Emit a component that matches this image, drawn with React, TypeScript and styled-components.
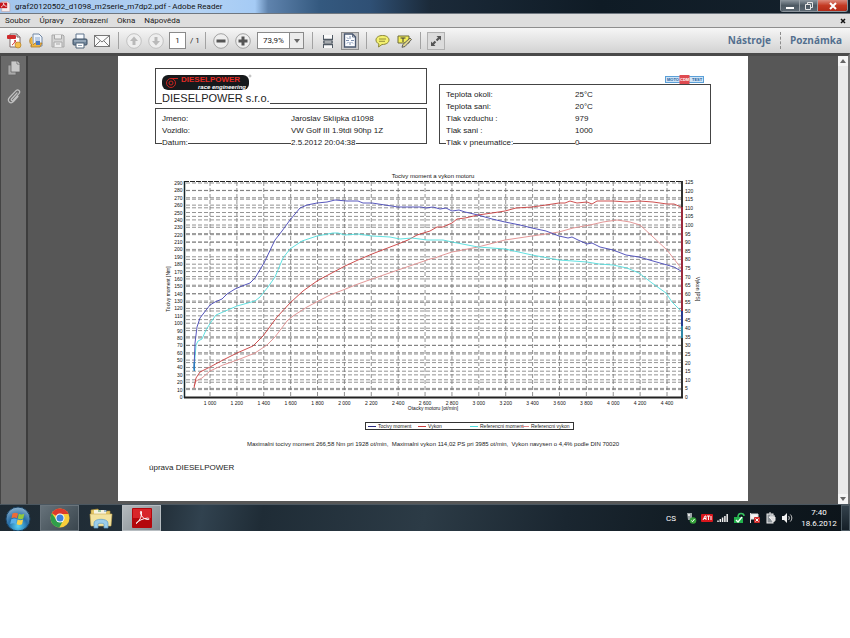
import React from "react";
import styled, { createGlobalStyle, css } from "styled-components";

const GlobalStyle = createGlobalStyle`
  * { box-sizing: border-box; }
  body { margin: 0; background: #fff; font-family: Roboto, "Noto Sans", sans-serif; }
  button, input, select { font: inherit; color: inherit; margin: 0; }
  ul, dl, dd, p, h1 { margin: 0; padding: 0; list-style: none; }
  svg { display: block; }
`;

/* ---------- window frame ---------- */

const TitleBar = styled.header`
  display: flex;
  align-items: center;
  height: 14px;
  padding-right: 2px;
  background: linear-gradient(90deg, #a3c5ec 0, #b3d2f4 200px, #a5cbf5 255px, #5f83ad 268px, #34597f 320px, #2f5075 370px, #1b2a39 430px, #0f1b25 600px, #14212c 100%);
  border-bottom: 1px solid #6f7780;
`;
const WindowTitle = styled.h1`
  flex: 1;
  margin-left: 4px;
  font-size: 8px;
  line-height: 12px;
  font-weight: 400;
  color: #111;
`;
const WindowButtons = styled.div`
  display: flex;
  align-self: flex-start;
  border: 1px solid #8b949c;
  border-top: 0;
  border-radius: 0 0 3px 3px;
  overflow: hidden;
`;
const WindowButton = styled.button<{ $close?: boolean }>`
  display: grid;
  place-items: center;
  width: ${(p) => (p.$close ? 30 : 18)}px;
  height: 11px;
  padding: 0;
  border: 0;
  border-left: 1px solid #9aa2a8;
  background: ${(p) =>
    p.$close ? "linear-gradient(#dc8a7c, #c43a24 50%, #b32a17)" : "linear-gradient(#8d979f, #4d5963 50%, #5d6973)"};
  &:first-child { border-left: 0; }
`;
const MenuBar = styled.nav`
  display: flex;
  align-items: center;
  gap: 3px;
  height: 14px;
  padding: 0 4px 0 2px;
  background: #dedede;
  border-bottom: 1px solid #8e8e8e;
`;
const MenuItem = styled.button`
  padding: 0 3px;
  border: 0;
  background: none;
  font-size: 8px;
  line-height: 12px;
  color: #222;
`;
const CloseDocument = styled(MenuItem)`
  margin-left: auto;
  padding: 0;
`;

/* ---------- toolbar ---------- */

const Toolbar = styled.div`
  display: flex;
  align-items: center;
  height: 25px;
  padding: 0 8px 0 3px;
  background: linear-gradient(#f6f6f6, #d2d2d2);
  font-size: 8px;
  color: #222;
`;
const frames = {
  pressed: css`border-color: #8d8d8d; background: #c9c9c9;`,
  raised: css`border-color: #b0b0b0; background: #dcdcdc;`,
};
const Tool = styled.button<{ $frame?: keyof typeof frames }>`
  display: grid;
  place-items: center;
  width: 18px;
  height: 18px;
  margin: 0 2px;
  padding: 0;
  border: 1px solid transparent;
  background: none;
  ${(p) => p.$frame && frames[p.$frame]}
`;
const Divider = styled.span`
  width: 1px;
  height: 17px;
  margin: 0 4px 0 5px;
  background: #a2a2a2;
`;
const PageField = styled.input`
  width: 17px;
  height: 17px;
  margin-left: 2px;
  padding: 0;
  border: 1px solid #8a8a8a;
  background: #fff;
  text-align: center;
`;
const PageCount = styled.label`
  width: 14px;
  padding-left: 4px;
  white-space: nowrap;
`;
const ZoomBox = styled.div`
  position: relative;
  margin: 0 3px;
`;
const ZoomSelect = styled.select`
  display: block;
  appearance: none;
  width: 47px;
  height: 17px;
  padding: 0 0 0 5px;
  border: 1px solid #8a8a8a;
  border-radius: 0;
  background: #fff;
`;
const ZoomArrow = styled.span`
  position: absolute;
  top: 1px;
  right: 1px;
  display: grid;
  place-items: center;
  width: 14px;
  height: 15px;
  border-left: 1px solid #8a8a8a;
  background: #ececec;
  pointer-events: none;
`;
const PaneButton = styled.button`
  padding: 0 9px;
  border: 0;
  background: none;
  font-size: 10px;
  line-height: 17px;
  font-weight: 700;
  color: #54708f;
  & + & { border-left: 1px dashed #8c8c8c; }
  &:last-child { padding-right: 0; }
`;
const PaneButtons = styled.div`
  display: flex;
  margin-left: auto;
  font-family: "Open Sans", "Noto Sans", sans-serif;
`;

/* ---------- document area ---------- */

const Workspace = styled.div`
  display: flex;
  border-top: 3px solid #4a4a4a;
  border-right: 2px solid #777;
  background: #575757;
`;
const SidePanel = styled.aside`
  display: flex;
  flex-direction: column;
  align-items: center;
  gap: 10px;
  width: 28px;
  padding-top: 2px;
  border-right: 2px solid #3d3d3d;
  border-left: 1px solid #444;
  background: #6a6a6a;
`;
const Canvas = styled.main`
  flex: 1;
  padding: 0 90px 3px;
`;
const ScrollTrack = styled.div`
  display: flex;
  flex-direction: column;
  justify-content: space-between;
  width: 10px;
  background: #e9e9e9;
`;
const ScrollButton = styled.button`
  display: grid;
  place-items: center;
  height: 10px;
  padding: 0;
  border: 0;
  background: #f4f4f4;
`;
const Paper = styled.article`
  padding: 12px 0 28px;
  background: #fff;
  color: #222;
  font-family: "Liberation Sans", Arial, sans-serif;
`;
const Heading = styled.div`
  display: grid;
  grid-template-columns: 1fr 1fr;
  align-items: end;
  gap: 12px;
  padding: 0 37px;
`;
const HeadingColumn = styled.div`
  display: flex;
  flex-direction: column;
  gap: 4px;
`;
const Frame = styled.div`
  border: 1px solid #444;
  padding: 4px 0 0 6px;
`;
const CompanyName = styled.p`
  width: max-content;
  margin-bottom: -1px;
  background: #fff;
  font-size: 11px;
  line-height: 12px;
`;
const Facts = styled.dl`
  padding: 4px 0 0 6px;
  border: 1px solid #444;
  font-size: 8px;
`;
const Fact = styled.div`
  display: grid;
  grid-template-columns: 129px 1fr;
  height: 12px;
  align-items: center;
  &:last-child { margin-bottom: -6px; }
`;
const Term = styled.dt`
  width: max-content;
  background: #fff;
  line-height: 10px;
`;
const Value = styled.dd`
  width: max-content;
  background: #fff;
  line-height: 10px;
`;
const TesterLogo = styled.div`
  display: flex;
  justify-content: flex-end;
  padding-right: 7px;
  margin-bottom: -4px;
`;
const Chart = styled.svg`
  width: 100%;
  height: auto;
  font-family: "Liberation Sans", Arial, sans-serif;
`;
const Legend = styled.ul`
  display: grid;
  grid-template-columns: 50px 52px 51px 52px;
  width: max-content;
  height: 8px;
  margin: 8px 0 0 247px;
  padding-left: 2px;
  border: 1px solid #333;
  font-size: 5px;
  line-height: 6px;
`;
const LegendItem = styled.li<{ $color: string }>`
  display: flex;
  align-items: center;
  gap: 2px;
  white-space: nowrap;
  &::before { content: ""; flex: none; width: 8px; height: 1px; background: ${(p) => p.$color}; }
`;
const Summary = styled.p`
  margin-top: 10px;
  font-size: 6px;
  line-height: 9px;
  text-align: center;
  white-space: pre-wrap;
`;
const Note = styled.p`
  margin: 14px 0 0 31px;
  font-size: 8px;
  line-height: 10px;
`;

/* ---------- taskbar ---------- */

const Taskbar = styled.footer`
  display: flex;
  align-items: center;
  height: 27px;
  border-top: 1px solid #4b5760;
  background: linear-gradient(100deg, #1d2932 0, #23303a 160px, #31424f 200px, #1f2c36 260px, #2c3b46 420px, #1a2630 560px, #101a21 700px, #0c141a 100%);
  color: #fff;
`;
const TaskButton = styled.button<{ $state?: "open" | "active" }>`
  display: grid;
  place-items: center;
  width: 39px;
  height: 26px;
  margin-right: 2px;
  padding: 0;
  border: 1px solid transparent;
  background: none;
  ${(p) => p.$state === "open" && css`border-color: #69747c; background: linear-gradient(135deg, #66727a, #3a464e);`}
  ${(p) => p.$state === "active" && css`border-color: #b7bdc1; background: linear-gradient(135deg, #b4babe, #7f888e);`}
  &:first-child { width: 36px; margin-right: 4px; }
`;
const Tray = styled.div`
  display: flex;
  align-items: center;
  margin-left: auto;
  font-size: 8px;
`;
const TrayButton = styled.button`
  display: grid;
  place-items: center;
  width: 12px;
  height: 14px;
  margin: 0 2px;
  padding: 0;
  border: 0;
  background: none;
`;
const Language = styled.span`
  margin-right: 7px;
`;
const Clock = styled.time`
  width: 44px;
  margin-left: 2px;
  line-height: 11px;
  text-align: center;
`;
const ShowDesktop = styled.button`
  width: 9px;
  height: 26px;
  padding: 0;
  border: 1px solid #4c5962;
  background: linear-gradient(#33414b, #151f27);
`;

/* ---------- icons ---------- */

const AdobeMark = ({ size, tile }: { size: number; tile?: boolean }) => (
  <svg width={size} height={size} viewBox="0 0 20 20">
    {tile ? <rect width="20" height="20" rx="1" fill="#b3070c" /> : <path d="M3 1h11l4 4v14H3z" fill="#f7eded" stroke="#b99" />}
    {tile && <rect x="1" y="1" width="18" height="9" fill="#d8262a" />}
    {!tile && <path d="M0 3h13v10H0z" fill="#c4161c" />}
    <path d={tile ? "M4 15.500c3-2 6-6.500 5.500-11.500 0-1.500-1.500-1-1 1 .8 4 4 6.500 8 6.500 1.500 0 .5-1.500-1-1.400C11 10.500 6.500 12.500 4 15.500z" : "M2 11c3-1.500 4.500-4 4.500-6.500C7.500 8 9 9.500 12 9.500"} fill="none" stroke="#fff" strokeWidth={tile ? 1 : 1.6} />
  </svg>
);
const CreatePdf = () => (
  <svg width="16" height="16" viewBox="0 0 16 16">
    <path d="M4 1h7l3 3v10H4z" fill="#fff" stroke="#7c6a6a" />
    <path d="M11 1v3h3" fill="#ddd" stroke="#7c6a6a" />
    <rect x="1" y="2" width="9" height="4" rx="1" fill="#cf2a2c" />
    <path d="M6 12c2-1 3-3 3-5 1 3 2 4 4 4" fill="none" stroke="#cf2a2c" />
    <circle cx="12" cy="12" r="3" fill="#f4bd4b" stroke="#b5822a" strokeWidth=".7" />
  </svg>
);
const OpenDoc = () => (
  <svg width="16" height="16" viewBox="0 0 16 16">
    <path d="M5 1h6l3 3v9H5z" fill="#edf3fb" stroke="#7288a4" />
    <path d="M7 5h5M7 7h5M7 9h4" stroke="#8ba8cf" />
    <path d="M4 4C1 5 1 11 4 12H3v2h9l2-4H7L5 12" fill="#efb643" stroke="#a9782b" strokeWidth=".8" />
    <path d="M8 8h4v4H8z" fill="#4d79bd" />
  </svg>
);
const SaveIcon = () => (
  <svg width="14" height="14" viewBox="0 0 14 14" fill="none" stroke="#a7a7a7">
    <path d="M1 1h11l1 1v11H1z" fill="#d5d5d5" />
    <path d="M3.500 1v4h7V1M3 13V8h8v5M5 10h4" fill="#ededed" />
  </svg>
);
const PrintIcon = () => (
  <svg width="16" height="16" viewBox="0 0 16 16">
    <path d="M4 6V1h8v5" fill="#f6faff" stroke="#60758c" />
    <rect x="1" y="6" width="14" height="6" rx="1" fill="#71869b" stroke="#3e5064" />
    <path d="M2 8h12" stroke="#b6c4d2" />
    <path d="M4 10h8v5H4z" fill="#fff" stroke="#53677b" />
    <path d="M6 12.500h4" stroke="#91a2b4" />
  </svg>
);
const MailIcon = () => (
  <svg width="16" height="12" viewBox="0 0 16 12" fill="none" stroke="#777">
    <rect x=".5" y=".5" width="15" height="11" fill="#fafafa" />
    <path d="M1 1l7 6 7-6M1 11l5-5M15 11l-5-5" />
  </svg>
);
const RoundIcon = ({ kind }: { kind: "up" | "down" | "minus" | "plus" }) => {
  const muted = kind === "up" || kind === "down";
  return (
    <svg width="16" height="16" viewBox="0 0 16 16">
      <circle cx="8" cy="8" r="7.300" fill="#eee" stroke={muted ? "#b8b8b8" : "#8f8f8f"} strokeWidth=".8" />
      {kind === "up" && <path d="M8 3.500l4 4.500H9.500v4h-3V8H4z" fill="#b9b9b9" />}
      {kind === "down" && <path d="M8 12.500L4 8h2.500V4h3v4H12z" fill="#b9b9b9" />}
      {!muted && <path d={kind === "minus" ? "M3.500 8h9" : "M3.500 8h9M8 3.500v9"} stroke="#555" strokeWidth="3" />}
    </svg>
  );
};
const FitWidth = () => (
  <svg width="12" height="14" viewBox="0 0 12 14" fill="none" stroke="#505a64">
    <path d="M1.500 1v5h9V1" fill="#fafafa" />
    <path d="M1.500 14v-4h9v4" fill="#fafafa" />
    <path d="M1 5.500h10M1 10.500h10" strokeWidth="1.500" />
    <path d="M1 8h10M3 7L1 8l2 1M9 7l2 1-2 1" strokeWidth=".8" />
  </svg>
);
const FitPage = () => (
  <svg width="14" height="15" viewBox="0 0 14 15" fill="none" stroke="#4a5870">
    <path d="M1.500 1h8l3 3v10h-11z" fill="#fafcff" strokeWidth="1.300" />
    <path d="M9.500 1v3h3" strokeWidth=".8" />
    <path d="M7 3v3M7 9v3M3 7.500h3M8 7.500h3M4 4.500l1.500 1.500M10 10.500L8.500 9M4 10.500L5.500 9" stroke="#6e83a6" strokeWidth=".9" />
  </svg>
);
const CommentIcon = () => (
  <svg width="15" height="14" viewBox="0 0 15 14">
    <path d="M7.500 1.500c4 0 6.500 2 6.500 4.500S11.500 10.500 7 10.500L3.500 13l.4-3C2 9 1 7.700 1 6c0-2.500 2.500-4.500 6.500-4.500z" fill="#f3f06f" stroke="#8b8738" />
    <path d="M4 5h7M4 7.300h6" stroke="#77742f" strokeWidth=".8" />
  </svg>
);
const HighlightIcon = () => (
  <svg width="15" height="14" viewBox="0 0 15 14">
    <path d="M1 2h11v7H1z" fill="#f4ef5a" stroke="#6d6b39" />
    <path d="M3.500 4h5M6 4v4" stroke="#393939" />
    <path d="M13 4l1.500 1.500L8 12.500l-3 .8.8-2.800z" fill="#ddd38a" stroke="#555" strokeWidth=".9" />
  </svg>
);
const ExpandIcon = () => (
  <svg width="14" height="14" viewBox="0 0 14 14" fill="#555">
    <path d="M7.500 2H12v4.500L10.500 5 8.300 7.200 6.800 5.700 9 3.500zM6.500 12H2V7.500L3.500 9l2.200-2.200 1.500 1.500L5 10.500z" />
  </svg>
);
const Triangle = ({ up }: { up?: boolean }) => (
  <svg width="6" height="4" viewBox="0 0 6 4"><path d={up ? "M3 0l3 4H0z" : "M0 0h6L3 4z"} fill="#666" /></svg>
);
const PagesIcon = () => (
  <svg width="14" height="18" viewBox="0 0 14 18" stroke="#666" strokeWidth=".8">
    <path d="M1 6h8v10H1z" fill="#a9a9a9" />
    <path d="M4 2h6l3 3v8H4z" fill="#c9c9c9" />
    <path d="M10 2v3h3" fill="#eee" />
  </svg>
);
const ClipIcon = () => (
  <svg width="16" height="18" viewBox="0 0 16 18" fill="none" stroke="#c0c0c0" strokeWidth="1.200" strokeLinecap="round">
    <path d="M11 6l-5.500 6c-1 1.200.5 2.500 1.500 1.400l6-6.700c2-2.500-1-5-3-3L3.500 10.500c-3 3.500 1 7 4 4L12 9.500" />
  </svg>
);
const CompanyLogo = () => (
  <svg width="90" height="19" viewBox="0 0 90 19" role="img" aria-label="Dieselpower race engineering">
    <rect x="0" y="2" width="87" height="15" rx="6" fill="#17191b" />
    <g fill="none" stroke="#c9241f">
      <circle cx="9" cy="10" r="4.500" /><circle cx="9" cy="10" r="2" /><path d="M9 5.500h7" />
    </g>
    <text x="19" y="9" fontFamily="Liberation Sans" fontWeight="700" fontSize="8" fill="#e02b25">DIESELPOWER</text>
    <text x="36" y="16" fontFamily="Liberation Sans" fontWeight="700" fontStyle="italic" fontSize="6" fill="#fff">race engineering</text>
    <circle cx="88" cy="3" r="1" fill="none" stroke="#777" strokeWidth=".5" />
  </svg>
);
const TestLogo = () => (
  <svg width="39" height="9" viewBox="0 0 39 9" fontFamily="Liberation Sans" fontWeight="700" role="img" aria-label="Moto CDM Test">
    <rect x=".5" y="1.500" width="38" height="6" fill="#cfe5f7" stroke="#5ba0d8" />
    <rect x="14.500" y="0" width="10" height="9" fill="#df4a50" />
    <text x="2" y="6" fontSize="4" fill="#1e5c9c">MOTO</text>
    <text x="15" y="6" fontSize="4" fill="#fff">CDM</text>
    <text x="27" y="6" fontSize="4" fill="#1e5c9c">TEST</text>
  </svg>
);
const StartOrb = () => (
  <svg width="26" height="26" viewBox="0 0 26 26">
    <defs>
      <radialGradient id="orb" cx=".5" cy=".8" r=".8"><stop offset="0" stopColor="#59d3f6" /><stop offset=".5" stopColor="#256da8" /><stop offset="1" stopColor="#8fb2cc" /></radialGradient>
    </defs>
    <circle cx="13" cy="13" r="12" fill="url(#orb)" stroke="#1a4263" />
    <path d="M7.500 7.500c2-1 3.500-1 5.500 0l-1 4.800c-2-1-3.500-1-5.500 0z" fill="#ef6a35" />
    <path d="M13.800 7.800c2 1 3.500 1 5.500 0l-1 4.800c-2 1-3.500 1-5.500 0z" fill="#93c93d" />
    <path d="M6.300 13.200c2-1 3.500-1 5.500 0l-1 4.800c-2-1-3.500-1-5.500 0z" fill="#58b0ea" />
    <path d="M12.600 13.500c2 1 3.500 1 5.500 0l-1 4.800c-2 1-3.500 1-5.500 0z" fill="#fbd14a" />
  </svg>
);
const ChromeIcon = () => (
  <svg width="20" height="20" viewBox="0 0 20 20">
    <circle cx="10" cy="10" r="9.500" fill="#f8ce3a" />
    <path d="M10 10L1.800 5.200A9.500 9.500 0 0 1 18.600 6H10z" fill="#dd3a2c" />
    <path d="M1.800 5.200A9.500 9.500 0 0 0 9.300 19.500L13.500 12 10 10 6.500 12z" fill="#2f9e4b" />
    <circle cx="10" cy="10" r="4.500" fill="#fff" />
    <circle cx="10" cy="10" r="3.500" fill="#3f82dc" />
  </svg>
);
const FolderIcon = () => (
  <svg width="24" height="22" viewBox="0 0 24 22">
    <path d="M2 3l7-1 1 2h11v14H2z" fill="#e4c766" stroke="#b3953c" strokeWidth=".6" />
    <path d="M5 3h12v4H5z" fill="#f7f3df" /><path d="M9 4h3" stroke="#4a9e57" /><path d="M15 4h3" stroke="#4c86c4" />
    <path d="M1 7h22l-1 12H2z" fill="#f3e3a0" stroke="#c9ad56" strokeWidth=".6" />
    <path d="M5 21v-5c0-5 14-5 14 0v5h-4v-4c0-1-6-1-6 0v4z" fill="#9bcdea" stroke="#5f9ec7" strokeWidth=".7" />
  </svg>
);

const trayIcons: { label: string; art: React.ReactNode }[] = [
  { label: "Bezpečně odebrat hardware", art: <><path d="M2 1h5v7H3z" fill="#9ca5a7" /><path d="M3 2h2v2H3z" fill="#e6e6e6" /><circle cx="8" cy="8.500" r="3.300" fill="#35a23a" /><path d="M6.500 8.500l1 1.200 2-2.700" stroke="#fff" fill="none" /></> },
  { label: "ATI", art: <><rect y="2" width="12" height="8" rx="1" fill="#d8161c" /><path d="M2 8l2-4h1v4M3 6.500h2M6 4h3M7.500 4v4M10 4v4" stroke="#fff" fill="none" /></> },
  { label: "Síť", art: <path d="M1 10V8.500M3.300 10V7M5.600 10V5.500M7.900 10V4M10.200 10V2" stroke="#f1f1f1" strokeWidth="1.500" /> },
  { label: "Antivirus", art: <><path d="M1 5h9v6H1z" fill="#21b24b" /><path d="M5 5c0-5 6-4 6-1" stroke="#37c45f" strokeWidth="1.500" fill="none" /><path d="M3 8l2 2 4-5" stroke="#fff" strokeWidth="1.300" fill="none" /></> },
  { label: "Centrum akcí", art: <><path d="M1.500 1v10M2 2h7v5H2" stroke="#ddd" fill="#f4f4f4" /><rect x="5" y="5" width="6" height="6" rx="1" fill="#d02b29" /><path d="M6.500 6.500l3 3M9.500 6.500l-3 3" stroke="#fff" /></> },
  { label: "Napájení", art: <><rect x="2" y="2" width="6" height="9" fill="#8d9499" stroke="#eee" /><path d="M4 1h2M4 5h6v3c0 2-3 2-3 0zM6 3v2M9 3v2" stroke="#eee" fill="#ddd" /></> },
  { label: "Hlasitost", art: <><path d="M1 4h2l3-3v10L3 8H1z" fill="#f2f2f2" /><path d="M7.500 4c1 1 1 3 0 4M9.300 2.500c2 2 2 5 0 7" stroke="#ccc" fill="none" /></> },
];

/* ---------- chart ---------- */

type Point = [number, number];

const torque: Point[] = [[194, 369], [195, 343], [197, 327], [200, 318], [210, 305], [215, 302], [222, 299], [227, 294], [235, 289], [242, 286], [250, 283], [255, 278], [264, 263], [275, 240], [282, 231], [290, 220], [300, 208], [307, 205], [317, 203], [327, 202], [335, 200], [347, 201], [358, 201], [363, 203], [372, 203], [385, 205], [398, 207], [410, 207], [421, 207], [426, 208], [433, 207], [440, 209], [446, 208], [452, 211], [459, 210], [465, 212], [478, 215], [492, 219], [505, 222], [520, 225], [532, 228], [546, 231], [559, 236], [568, 238], [572, 237], [578, 240], [587, 244], [592, 243], [600, 247], [613, 250], [626, 255], [639, 257], [653, 261], [667, 265], [674, 267], [681, 271]];
const refTorque: Point[] = [[194, 370], [196, 345], [198, 341], [202, 339], [206, 330], [211, 322], [216, 315], [223, 312], [237, 306], [255, 301], [260, 297], [268, 287], [275, 277], [283, 258], [290, 249], [302, 241], [317, 236], [333, 233], [338, 233], [345, 235], [358, 234], [372, 236], [390, 237], [400, 239], [412, 238], [427, 240], [443, 240], [452, 242], [478, 247], [505, 249], [532, 255], [559, 260], [587, 262], [599, 264], [613, 265], [627, 268], [639, 273], [652, 283], [666, 293], [672, 302], [681, 311]];
const power: Point[] = [[194, 388], [196, 378], [200, 372], [210, 367], [223, 360], [237, 353], [253, 346], [263, 336], [277, 317], [290, 303], [303, 291], [317, 281], [328, 275], [345, 266], [358, 260], [372, 254], [385, 249], [398, 244], [408, 240], [417, 235], [430, 231], [437, 227], [443, 227], [452, 223], [457, 219], [465, 218], [478, 215], [492, 213], [505, 211], [516, 208], [532, 207], [546, 205], [559, 203], [565, 203], [570, 201], [577, 203], [587, 202], [592, 204], [597, 201], [613, 201], [627, 202], [639, 201], [653, 202], [667, 204], [674, 204], [681, 207]];
const refPower: Point[] = [[194, 386], [196, 381], [202, 378], [210, 371], [223, 365], [240, 359], [255, 353], [267, 345], [275, 337], [287, 321], [293, 316], [307, 307], [330, 295], [343, 290], [358, 284], [372, 279], [398, 270], [430, 259], [435, 258], [440, 256], [452, 252], [478, 247], [505, 240], [532, 236], [559, 232], [573, 228], [590, 225], [603, 222], [617, 220], [630, 222], [640, 225], [652, 236], [667, 250], [681, 268]];

const toPoints = (pts: Point[]) => pts.map((p) => p.join(",")).join(" ");
const yTorque = (v: number) => 397 - (v * 214) / 290;
const yPower = (v: number) => 397 - (v * 215) / 125;
const xSpeed = (v: number) => 210 + ((v - 1000) * 457) / 3400;
const range = (from: number, to: number, step: number) =>
  Array.from({ length: (to - from) / step + 1 }, (_, i) => from + i * step);
const spaced = (v: number) => `${Math.floor(v / 1000)} ${String(v % 1000).padStart(3, "0")}`;

const PowerChart = () => (
  <Chart viewBox="118 144 630 270" role="img" aria-label="Tocivy moment a vykon motoru" fontSize="5" fill="#111">
    <text x="433" y="178" textAnchor="middle" fontSize="6">Tocivy moment a vykon motoru</text>
    <g stroke="#777" strokeWidth="0.800" strokeDasharray="4 2">
      {range(10, 290, 10).map((v) => <path key={`t${v}`} d={`M186 ${yTorque(v)}H681`} />)}
      {range(5, 120, 5).map((v) => <path key={`p${v}`} d={`M186 ${yPower(v)}H681`} />)}
      {range(1000, 4400, 200).map((v) => <path key={`s${v}`} d={`M${xSpeed(v)} 182V396`} />)}
    </g>
    {range(0, 290, 10).map((v) => <text key={v} x="182.500" y={yTorque(v) + 2} textAnchor="end">{v}</text>)}
    {range(0, 125, 5).map((v) => <text key={v} x="685" y={yPower(v) + 2}>{v}</text>)}
    {range(1000, 4400, 200).map((v) => <text key={v} x={xSpeed(v)} y="405" textAnchor="middle">{spaced(v)}</text>)}
    <text x="433" y="410" textAnchor="middle">Otacky motoru [ot/min]</text>
    <text transform="translate(170 289) rotate(-90)" textAnchor="middle">Tocivy moment [Nm]</text>
    <text transform="translate(696 289) rotate(90)" textAnchor="middle">Vykon [PS]</text>
    <path d="M184 181.500H682" stroke="#222" strokeDasharray="5 1" />
    <path d="M184.500 181V398" stroke="#16262b" strokeWidth="1.500" />
    <path d="M682 181V398" stroke="#333" strokeWidth="2" />
    <path d="M184 397.500H683" stroke="#222" strokeWidth="2" />
    <g fill="none" strokeWidth="0.900">
      <polyline points={toPoints(refPower)} stroke="#e08c8c" />
      <polyline points={toPoints(power)} stroke="#c83c3c" />
      <polyline points={toPoints(refTorque)} stroke="#4fdede" />
      <polyline points={toPoints(torque)} stroke="#4545b5" />
    </g>
    <g strokeWidth="1.500">
      <path d="M682 207V311" stroke="#c02840" />
      <path d="M682 311V326" stroke="#2440b0" />
      <path d="M682 326V338" stroke="#2fa6cf" />
      <path d="M194.300 371V362" stroke="#2a7fc0" />
    </g>
  </Chart>
);

/* ---------- page ---------- */

const FactList = ({ rows }: { rows: [string, string][] }) => (
  <Facts>
    {rows.map(([k, v]) => <Fact key={k}><Term>{k}</Term><Value>{v}</Value></Fact>)}
  </Facts>
);

export default function App() {
  return (
    <>
      <GlobalStyle />
      <TitleBar>
        <AdobeMark size={11} />
        <WindowTitle>graf20120502_d1098_m2serie_m7dp2.pdf - Adobe Reader</WindowTitle>
        <WindowButtons>
          <WindowButton aria-label="Minimalizovat"><svg width="8" height="8"><path d="M0 5h8v2H0z" fill="#fff" /></svg></WindowButton>
          <WindowButton aria-label="Obnovit"><svg width="8" height="8" fill="none" stroke="#e8e8e8"><path d="M2.500 2V.5h5v5H6M.5 2.500h5v5h-5z" /></svg></WindowButton>
          <WindowButton $close aria-label="Zavřít"><svg width="8" height="8"><path d="M1 1l6 6M7 1L1 7" stroke="#fff" strokeWidth="2" /></svg></WindowButton>
        </WindowButtons>
      </TitleBar>
      <MenuBar>
        {["Soubor", "Úpravy", "Zobrazení", "Okna", "Nápověda"].map((m) => <MenuItem key={m}>{m}</MenuItem>)}
        <CloseDocument aria-label="Zavřít dokument"><svg width="6" height="6"><path d="M1 1l4 4M5 1L1 5" stroke="#111" strokeWidth="1.500" /></svg></CloseDocument>
      </MenuBar>
      <Toolbar role="toolbar">
        <Tool aria-label="Vytvořit PDF"><CreatePdf /></Tool>
        <Tool aria-label="Otevřít"><OpenDoc /></Tool>
        <Tool aria-label="Uložit"><SaveIcon /></Tool>
        <Tool aria-label="Tisk"><PrintIcon /></Tool>
        <Tool aria-label="E-mail"><MailIcon /></Tool>
        <Divider />
        <Tool aria-label="Předchozí stránka"><RoundIcon kind="up" /></Tool>
        <Tool aria-label="Další stránka"><RoundIcon kind="down" /></Tool>
        <PageField id="page" defaultValue="1" />
        <PageCount htmlFor="page">/ 1</PageCount>
        <Divider />
        <Tool aria-label="Zmenšit"><RoundIcon kind="minus" /></Tool>
        <Tool aria-label="Zvětšit"><RoundIcon kind="plus" /></Tool>
        <ZoomBox>
          <ZoomSelect aria-label="Lupa" defaultValue="73,9%"><option>73,9%</option><option>100%</option></ZoomSelect>
          <ZoomArrow><Triangle /></ZoomArrow>
        </ZoomBox>
        <Divider />
        <Tool aria-label="Šířka stránky"><FitWidth /></Tool>
        <Tool aria-label="Celá stránka" $frame="pressed"><FitPage /></Tool>
        <Divider />
        <Tool aria-label="Komentář"><CommentIcon /></Tool>
        <Tool aria-label="Zvýraznit"><HighlightIcon /></Tool>
        <Divider />
        <Tool aria-label="Celá obrazovka" $frame="raised"><ExpandIcon /></Tool>
        <PaneButtons>
          <PaneButton>Nástroje</PaneButton>
          <PaneButton>Poznámka</PaneButton>
        </PaneButtons>
      </Toolbar>
      <Workspace>
        <SidePanel>
          <Tool aria-label="Miniatury stránek"><PagesIcon /></Tool>
          <Tool aria-label="Přílohy"><ClipIcon /></Tool>
        </SidePanel>
        <Canvas>
          <Paper>
            <Heading>
              <HeadingColumn>
                <Frame>
                  <CompanyLogo />
                  <CompanyName>DIESELPOWER s.r.o.</CompanyName>
                </Frame>
                <FactList rows={[["Jmeno:", "Jaroslav Sklípka d1098"], ["Vozidlo:", "VW Golf III 1.9tdi 90hp 1Z"], ["Datum:", "2.5.2012 20:04:38"]]} />
              </HeadingColumn>
              <HeadingColumn>
                <TesterLogo><TestLogo /></TesterLogo>
                <FactList rows={[["Teplota okoli:", "25°C"], ["Teplota sani:", "20°C"], ["Tlak vzduchu :", "979"], ["Tlak sani :", "1000"], ["Tlak v pneumatice:", "0"]]} />
              </HeadingColumn>
            </Heading>
            <PowerChart />
            <Legend>
              <LegendItem $color="#2a2a80">Tocivy moment</LegendItem>
              <LegendItem $color="#c83c3c">Vykon</LegendItem>
              <LegendItem $color="#4fdede">Referencni moment</LegendItem>
              <LegendItem $color="#e08c8c">Referencni vykon</LegendItem>
            </Legend>
            <Summary>{"Maximalni tocivy moment 266,58 Nm pri 1928 ot/min,  Maximalni vykon 114,02 PS pri 3985 ot/min,  Vykon navysen o 4,4% podle DIN 70020"}</Summary>
            <Note>úprava DIESELPOWER</Note>
          </Paper>
        </Canvas>
        <ScrollTrack>
          <ScrollButton aria-label="Nahoru"><Triangle up /></ScrollButton>
          <ScrollButton aria-label="Dolů"><Triangle /></ScrollButton>
        </ScrollTrack>
      </Workspace>
      <Taskbar>
        <TaskButton aria-label="Start"><StartOrb /></TaskButton>
        <TaskButton aria-label="Google Chrome" $state="open"><ChromeIcon /></TaskButton>
        <TaskButton aria-label="Průzkumník"><FolderIcon /></TaskButton>
        <TaskButton aria-label="Adobe Reader" $state="active"><AdobeMark size={20} tile /></TaskButton>
        <Tray>
          <Language>CS</Language>
          {trayIcons.map((t) => (
            <TrayButton key={t.label} aria-label={t.label}><svg width="12" height="12" viewBox="0 0 12 12">{t.art}</svg></TrayButton>
          ))}
          <Clock>7:40<br />18.6.2012</Clock>
          <ShowDesktop aria-label="Zobrazit plochu" />
        </Tray>
      </Taskbar>
    </>
  );
}
